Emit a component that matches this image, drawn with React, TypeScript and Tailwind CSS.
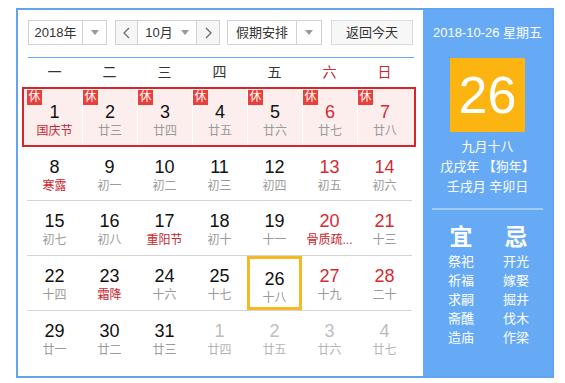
type Day = { d: number; l: string; fest?: boolean; other?: boolean; today?: boolean };

const rows: Day[][] = [
  [
    { d: 1, l: "国庆节", fest: true },
    { d: 2, l: "廿三" },
    { d: 3, l: "廿四" },
    { d: 4, l: "廿五" },
    { d: 5, l: "廿六" },
    { d: 6, l: "廿七" },
    { d: 7, l: "廿八" },
  ],
  [
    { d: 8, l: "寒露", fest: true },
    { d: 9, l: "初一" },
    { d: 10, l: "初二" },
    { d: 11, l: "初三" },
    { d: 12, l: "初四" },
    { d: 13, l: "初五" },
    { d: 14, l: "初六" },
  ],
  [
    { d: 15, l: "初七" },
    { d: 16, l: "初八" },
    { d: 17, l: "重阳节", fest: true },
    { d: 18, l: "初十" },
    { d: 19, l: "十一" },
    { d: 20, l: "骨质疏...", fest: true },
    { d: 21, l: "十三" },
  ],
  [
    { d: 22, l: "十四" },
    { d: 23, l: "霜降", fest: true },
    { d: 24, l: "十六" },
    { d: 25, l: "十七" },
    { d: 26, l: "十八", today: true },
    { d: 27, l: "十九" },
    { d: 28, l: "二十" },
  ],
  [
    { d: 29, l: "廿一" },
    { d: 30, l: "廿二" },
    { d: 31, l: "廿三" },
    { d: 1, l: "廿四", other: true },
    { d: 2, l: "廿五", other: true },
    { d: 3, l: "廿六", other: true },
    { d: 4, l: "廿七", other: true },
  ],
];

const weekdays = ["一", "二", "三", "四", "五", "六", "日"];
const yi = ["祭祀", "祈福", "求嗣", "斋醮", "造庙"];
const ji = ["开光", "嫁娶", "掘井", "伐木", "作梁"];

function Caret() {
  return (
    <svg width="8" height="5" viewBox="0 0 8 5">
      <path d="M0 0h8L4 5z" fill="#999" />
    </svg>
  );
}

function Chevron({ dir }: { dir: "l" | "r" }) {
  return (
    <svg width="7" height="12" viewBox="0 0 7 12">
      <polyline
        points={dir === "l" ? "6,1 1,6 6,11" : "1,1 6,6 1,11"}
        fill="none"
        stroke="#666"
        strokeWidth="1.2"
      />
    </svg>
  );
}

function Cell({ day, col, holiday }: { day: Day; col: number; holiday?: boolean }) {
  const weekend = col >= 5;
  let numColor = weekend ? "text-[#d42b32]" : "text-[#111]";
  let lunarColor = day.fest ? "text-[#c9252e]" : "text-[#9a9a9a]";
  if (day.other) {
    numColor = "text-[#bdbdbd]";
    lunarColor = "text-[#b5b5b5]";
  }
  return (
    <div
      className={`relative flex flex-col items-center ${
        holiday ? "pt-[12px] bg-[#fdeeee] border-l border-white first:border-l-0" : "pt-[9px]"
      } ${day.today ? "border-[3px] border-[#f6b924] pt-[6px]" : ""}`}
    >
      {holiday && (
        <span className="absolute left-0 top-px w-[15px] h-[15px] bg-[#e8403a] text-white text-[12px] leading-[15px] text-center">
          休
        </span>
      )}
      <span className={`text-[18px] leading-[22px] ${numColor}`}>{day.d}</span>
      <span className={`text-[12px] leading-[16px] whitespace-nowrap ${lunarColor}`}>{day.l}</span>
    </div>
  );
}

export default function App() {
  return (
    <div
      className="w-[565px] h-[383px] bg-white pl-[16px] pt-[8px]"
      style={{ fontFamily: '"Liberation Sans", "Noto Sans CJK SC", sans-serif' }}
    >
      <div className="flex w-[538px] h-[370px] border-2 border-[#63a4ee]">
        {/* left: calendar */}
        <div className="w-[405px] pl-[10px] pr-[9px] pt-[10px]">
          <div className="flex items-center h-[25px] text-[13px] text-[#333]">
            <div className="flex h-full w-[79px] border border-[#d2d2d2]">
              <div className="flex-1 flex items-center justify-center">2018年</div>
              <div className="w-[24px] flex items-center justify-center border-l border-[#d2d2d2]">
                <Caret />
              </div>
            </div>
            <div className="flex h-full ml-[8px] border border-[#d2d2d2]">
              <div className="w-[21px] flex items-center justify-center bg-[#f6f6f6]">
                <Chevron dir="l" />
              </div>
              <div className="w-[60px] flex items-center justify-center gap-[8px] border-x border-[#d2d2d2]">
                <span>10月</span>
                <Caret />
              </div>
              <div className="w-[22px] flex items-center justify-center bg-[#f6f6f6]">
                <Chevron dir="r" />
              </div>
            </div>
            <div className="flex h-full w-[95px] ml-[7px] border border-[#d2d2d2]">
              <div className="flex-1 flex items-center justify-center">假期安排</div>
              <div className="w-[25px] flex items-center justify-center border-l border-[#d2d2d2]">
                <Caret />
              </div>
            </div>
            <div className="flex h-full w-[82px] ml-[9px] items-center justify-center border border-[#dcdcdc] bg-[#f7f7f7]">
              返回今天
            </div>
          </div>

          <div className="mt-[12px] h-px bg-[#6aa6ea]" />

          <div className="ml-[-1px] grid grid-cols-[repeat(7,55px)] h-[29px] items-center text-[14px]">
            {weekdays.map((w, i) => (
              <div key={w} className={`text-center ${i >= 5 ? "text-[#c8282f]" : "text-[#333]"}`}>
                {w}
              </div>
            ))}
          </div>

          <div className="ml-[-6px] mr-[-2px] border-2 border-[#d4262d] pl-[3px] bg-[#fdeeee]">
            <div className="grid grid-cols-[repeat(7,55px)] h-[56px]">
              {rows[0].map((d, i) => (
                <Cell key={i} day={d} col={i} holiday />
              ))}
            </div>
          </div>

          <div className="ml-[-1px] w-[385px]">
            <div className="grid grid-cols-[repeat(7,55px)] h-[53px]">
              {rows[1].map((d, i) => (
                <Cell key={i} day={d} col={i} />
              ))}
            </div>
            {rows.slice(2).map((r, ri) => (
              <div key={ri} className="grid grid-cols-[repeat(7,55px)] h-[55px] border-t border-[#d4d4d4]">
                {r.map((d, i) => (
                  <Cell key={i} day={d} col={i} />
                ))}
              </div>
            ))}
          </div>
        </div>

        {/* right: today panel */}
        <div className="flex-1 bg-[#66aaf6] text-white flex flex-col items-center pt-[13px]">
          <div className="text-[13px] leading-[20px]">2018-10-26 星期五</div>
          <div className="mt-[15px] w-[75px] h-[74px] bg-[#fcb410] flex items-center justify-center text-[52px] leading-none">
            26
          </div>
          <div className="mt-[5px] text-[13px] leading-[20px] text-center">
            <div>九月十八</div>
            <div>戊戌年 【狗年】</div>
            <div>壬戌月 辛卯日</div>
          </div>
          <div className="mt-[11px] h-[2px] w-[111px] bg-[#a3cbf8]" />
          <div className="mt-[13px] flex gap-[15px] ml-[2px]">
            {[
              { t: "宜", items: yi },
              { t: "忌", items: ji },
            ].map((c) => (
              <div key={c.t} className="w-[40px] flex flex-col items-center">
                <div className="text-[23px] leading-[28px] font-bold">{c.t}</div>
                <div className="mt-[1px] text-[13px] leading-[19px]">
                  {c.items.map((x) => (
                    <div key={x}>{x}</div>
                  ))}
                </div>
              </div>
            ))}
          </div>
        </div>
      </div>
    </div>
  );
}
